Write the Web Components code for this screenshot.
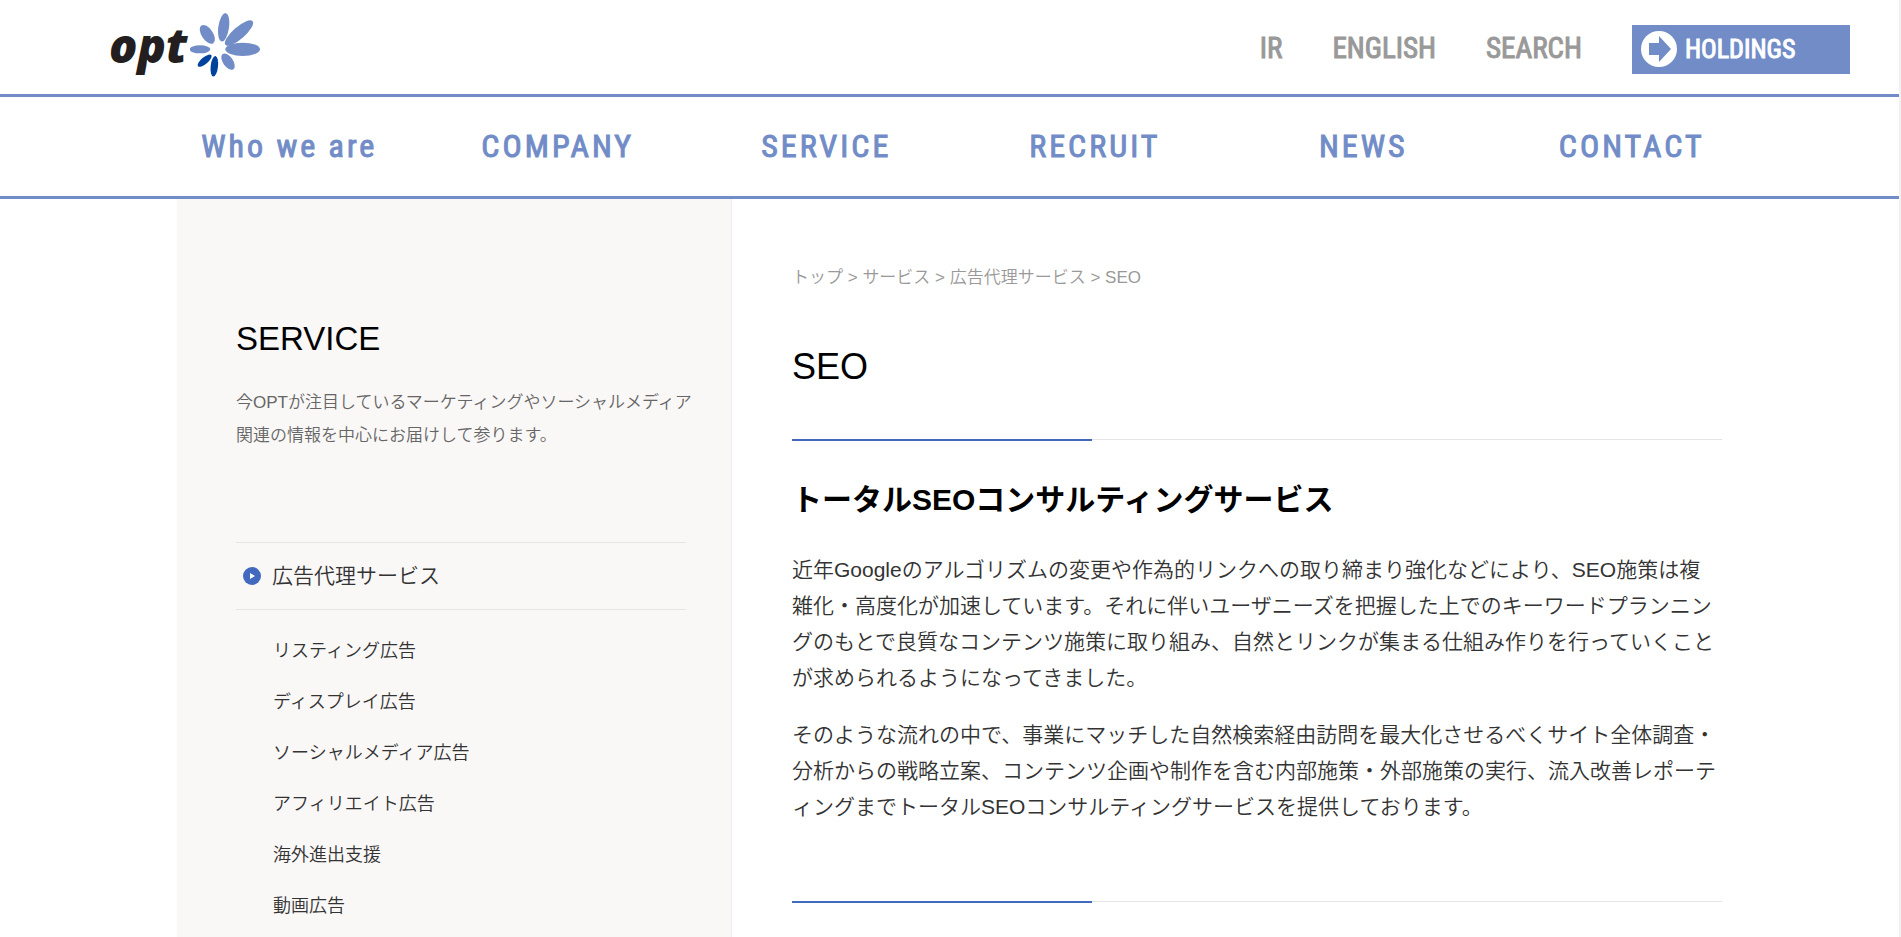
<!DOCTYPE html>
<html lang="ja">
<head>
<meta charset="utf-8">
<title>SEO | OPT</title>
<style>
  :root {
    --brand: #718cc7;
    --accent: #416abf;
    --rule: #e5e5e5;
    --cond: "Roboto Condensed", "Liberation Sans Narrow", "Noto Sans CJK JP", sans-serif;
  }
  body {
    margin: 0;
    background: #fff;
    color: #333;
    font-family: "Liberation Sans", "Noto Sans CJK JP", sans-serif;
    font-weight: 350;
  }
</style>
</head>
<body>
<opt-page></opt-page>

<template id="t-logo">
  <style>
    :host { display: block; }
    a { display: flex; align-items: center; gap: 2px; padding-bottom: 4px; color: #231f20; text-decoration: none; }
    span { font: italic 800 47px/64px "Open Sans", sans-serif; }
    svg { display: block; width: 70px; height: 64px; }
  </style>
  <a href="#" aria-label="opt">
    <span>opt</span>
    <svg viewBox="300 39 210 192" aria-hidden="true">
      <g fill="#718cc7">
        <ellipse cx="401" cy="82" rx="16" ry="43" transform="rotate(8 401 82)"/>
        <ellipse cx="447" cy="99" rx="18" ry="54" transform="rotate(49 447 99)"/>
        <ellipse cx="458" cy="148" rx="52" ry="20"/>
        <ellipse cx="414" cy="185" rx="15" ry="28" transform="rotate(-35 414 185)"/>
        <ellipse cx="330" cy="148" rx="31" ry="12"/>
        <ellipse cx="352" cy="103" rx="17" ry="32" transform="rotate(-34 352 103)"/>
      </g>
      <g fill="#00439c">
        <ellipse cx="373" cy="199" rx="11" ry="31" transform="rotate(6 373 199)"/>
        <ellipse cx="344" cy="182" rx="10" ry="26" transform="rotate(50 344 182)"/>
      </g>
    </svg>
  </a>
</template>

<template id="t-header">
  <style>
    :host { display: block; border-bottom: 3px solid var(--brand); }
    header { display: flex; align-items: center; justify-content: space-between; height: 94px; padding: 0 49px 0 109px; }
    nav { display: flex; align-items: center; gap: 50px; padding-top: 4px; }
    a { padding-bottom: 2px; font: 400 29px/46px var(--cond); -webkit-text-stroke: 1px; color: #999; text-decoration: none; }
    .holdings { display: flex; align-items: center; gap: 8px; box-sizing: border-box; width: 218px; height: 49px; padding: 0 0 0 9px; background: var(--brand); color: #fff; font-size: 26px; }
    svg { width: 36px; height: 36px; }
  </style>
  <header>
    <opt-logo></opt-logo>
    <nav aria-label="Utility">
      <a href="#">IR</a>
      <a href="#">ENGLISH</a>
      <a href="#">SEARCH</a>
      <a href="#" class="holdings">
        <svg viewBox="0 0 36 36" aria-hidden="true">
          <circle cx="18" cy="18" r="18" fill="#fff"/>
          <path d="M8 12H18V5L30 18L18 31V24H8Z" fill="#718cc7"/>
        </svg>HOLDINGS</a>
    </nav>
  </header>
</template>

<template id="t-nav">
  <style>
    :host { display: block; border-bottom: 3px solid var(--brand); }
    nav { display: grid; grid-template-columns: repeat(6, 1fr); padding: 0 133px 0 155px; }
    a { font: 400 32px/99px var(--cond); -webkit-text-stroke: 1px; letter-spacing: 3px; color: var(--brand); text-align: center; text-decoration: none; white-space: nowrap; }
  </style>
  <nav aria-label="Main">
    <a href="#">Who we are</a><a href="#">COMPANY</a><a href="#">SERVICE</a><a href="#">RECRUIT</a><a href="#">NEWS</a><a href="#">CONTACT</a>
  </nav>
</template>

<template id="t-side">
  <style>
    :host { display: block; box-sizing: border-box; padding: 118px 45px 0 59px; background: #f9f8f7; border-right: 1px solid #ececec; }
    h2 { margin: 0; font-size: 33px; line-height: 44px; font-weight: 400; color: #000; }
    p { margin: 25px 0 90px; font-size: 17px; line-height: 33px; color: #666; white-space: nowrap; }
    a { color: inherit; text-decoration: none; }
    h3 { display: flex; align-items: center; gap: 11px; margin: 0 0 16px; padding-left: 7px; border: solid var(--rule); border-width: 1px 0; font-size: 21px; line-height: 66px; font-weight: inherit; }
    svg { width: 18px; height: 18px; }
    ul { margin: 0; padding: 0 0 0 37px; list-style: none; font-size: 18px; line-height: 51px; }
  </style>
  <h2>SERVICE</h2>
  <p>今OPTが注目しているマーケティングやソーシャルメディア<br>関連の情報を中心にお届けして参ります。</p>
  <h3>
    <svg viewBox="0 0 18 18" aria-hidden="true"><circle cx="9" cy="9" r="9" fill="#416abf"/><path d="M7 6L12 9L7 12Z" fill="#fff"/></svg>
    <a href="#">広告代理サービス</a>
  </h3>
  <ul>
    <li><a href="#">リスティング広告</a></li>
    <li><a href="#">ディスプレイ広告</a></li>
    <li><a href="#">ソーシャルメディア広告</a></li>
    <li><a href="#">アフィリエイト広告</a></li>
    <li><a href="#">海外進出支援</a></li>
    <li><a href="#">動画広告</a></li>
  </ul>
</template>

<template id="t-rule">
  <style>
    :host { display: block; height: 2px; background: linear-gradient(var(--accent), var(--accent)) 0 0 / 300px 2px no-repeat, linear-gradient(var(--rule), var(--rule)) 0 0 / 100% 1px no-repeat; }
  </style>
</template>

<template id="t-crumbs">
  <style>
    :host { display: block; font-size: 17px; line-height: 24px; color: #999; }
    a { color: inherit; text-decoration: none; }
  </style>
  <nav aria-label="Breadcrumb"><a href="#">トップ</a> &gt; <a href="#">サービス</a> &gt; <a href="#">広告代理サービス</a> &gt; SEO</nav>
</template>

<template id="t-article">
  <style>
    :host { display: block; padding-top: 67px; }
    h1 { margin: 53px 0 48px; font-size: 36px; line-height: 48px; font-weight: 400; color: #000; }
    ::slotted(h2) { margin: 37px 0 30px; font-size: 30px; line-height: 44px; font-weight: 700; color: #000; }
    ::slotted(p) { margin: 0 4px 21px 0; font-size: 21px; line-height: 36px; }
    .end { margin-top: 76px; }
  </style>
  <opt-crumbs></opt-crumbs>
  <h1>SEO</h1>
  <opt-rule></opt-rule>
  <slot></slot>
  <opt-rule class="end"></opt-rule>
</template>

<template id="t-page">
  <style>
    :host { display: flex; flex-direction: column; box-sizing: border-box; height: 100vh; overflow: hidden; border-right: 2px solid #f1f1f1; }
    opt-header, opt-nav { flex: none; }
    .wrap { flex: 1; display: grid; grid-template-columns: 555px 1fr; column-gap: 60px; box-sizing: border-box; width: 100%; max-width: 1545px; min-height: 0; margin: 0 auto; }
  </style>
  <opt-header></opt-header>
  <opt-nav></opt-nav>
  <div class="wrap">
    <opt-side></opt-side>
    <opt-article>
      <h2>トータルSEOコンサルティングサービス</h2>
      <p>近年Googleのアルゴリズムの変更や作為的リンクへの取り締まり強化などにより、SEO施策は複雑化・高度化が加速しています。それに伴いユーザニーズを把握した上でのキーワードプランニングのもとで良質なコンテンツ施策に取り組み、自然とリンクが集まる仕組み作りを行っていくことが求められるようになってきました。</p>
      <p>そのような流れの中で、事業にマッチした自然検索経由訪問を最大化させるべくサイト全体調査・分析からの戦略立案、コンテンツ企画や制作を含む内部施策・外部施策の実行、流入改善レポーティングまでトータルSEOコンサルティングサービスを提供しております。</p>
    </opt-article>
  </div>
</template>

<script>
  class TemplateElement extends HTMLElement {
    constructor() {
      super();
      const id = 't-' + this.localName.slice(4);
      this.attachShadow({ mode: 'open' })
        .append(document.getElementById(id).content.cloneNode(true));
    }
  }
  for (const name of ['logo', 'header', 'nav', 'side', 'rule', 'crumbs', 'article', 'page']) {
    customElements.define('opt-' + name, class extends TemplateElement {});
  }
</script>
</body>
</html>
